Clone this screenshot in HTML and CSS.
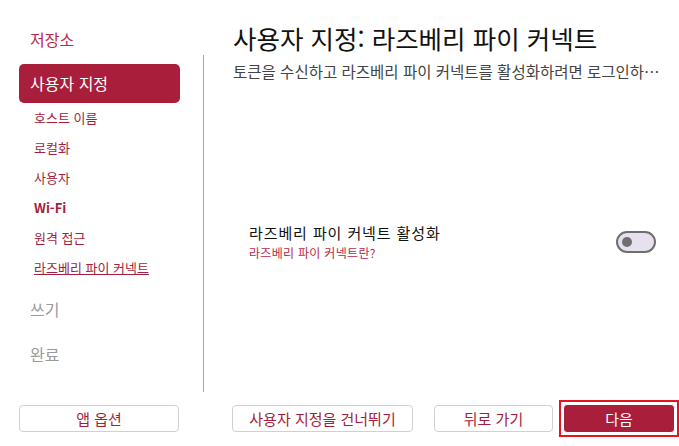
FILE: index.html
```html
<!DOCTYPE html>
<html lang="ko">
<head>
  <meta charset="UTF-8">
  <meta name="viewport" content="width=device-width, initial-scale=1.0">
  <title>사용자 지정</title>
  <link rel="stylesheet" href="styles.css">
</head>
<body>
  <div class="app">
    <!-- 사이드바 -->
    <nav class="sidebar">
      <div class="step">저장소</div>
      <div class="step active">사용자 지정</div>
      <div class="sub">호스트 이름</div>
      <div class="sub">로컬화</div>
      <div class="sub">사용자</div>
      <div class="sub bold">Wi-Fi</div>
      <div class="sub">원격 접근</div>
      <div class="sub current">라즈베리 파이 커넥트</div>
      <div class="step disabled">쓰기</div>
      <div class="step disabled">완료</div>
    </nav>

    <div class="divider"></div>

    <!-- 본문 -->
    <main class="content">
      <h1 class="title">사용자 지정: 라즈베리 파이 커넥트</h1>
      <p class="subtitle">토큰을 수신하고 라즈베리 파이 커넥트를 활성화하려면 로그인하여 이 장치를 계정에 연결하세요.</p>
      <div class="option-area">
        <div class="option">
          <div class="option-text">
            <div class="option-label">라즈베리 파이 커넥트 활성화</div>
            <a class="option-link" href="#">라즈베리 파이 커넥트란?</a>
          </div>
          <div class="toggle"><span class="knob"></span></div>
        </div>
      </div>
    </main>

    <!-- 하단 버튼 -->
    <div class="side-footer">
      <button class="btn side-btn">앱 옵션</button>
    </div>
    <div class="footer">
      <button class="btn skip">사용자 지정을 건너뛰기</button>
      <button class="btn back">뒤로 가기</button>
      <span class="focus-ring"><button class="btn next">다음</button></span>
    </div>
  </div>
</body>
</html>
```

FILE: styles.css
```css
body {
  margin: 0;
  background: #fff;
  font-family: "Noto Sans CJK KR", "Noto Sans", sans-serif;
  color: #111;
}
.app {
  display: grid;
  grid-template-columns: 203px 1px 1fr;
  grid-template-rows: 395px 51px;
  width: 679px;
  height: 446px;
  overflow: hidden;
}
.sidebar {
  padding: 20px 23px 0 19px;
  display: flex;
  flex-direction: column;
}
.step {
  height: 39px;
  line-height: 39px;
  padding-left: 11px;
  font-size: 16px;
  color: #b8284a;
  border-radius: 5px;
  margin-bottom: 5px;
}
.step.active {
  background: #a91e3b;
  color: #fff;
  margin-bottom: 0;
}
.step.disabled {
  color: #9a9a9a;
  margin-bottom: 6px;
}
.sub {
  height: 30px;
  line-height: 30px;
  padding-left: 15px;
  font-size: 13px;
  color: #a51d3c;
}
.sub.bold {
  font-weight: bold;
}
.sub.current {
  text-decoration: underline;
  margin-bottom: 7px;
}
.divider {
  background: #a8a8a8;
  margin: 55px 0 3px;
}
.content {
  padding: 21px 6px 0 29px;
  display: flex;
  flex-direction: column;
  min-width: 0;
}
.title {
  margin: 0;
  font-size: 25.5px;
  line-height: 34px;
  font-weight: normal;
  color: #111;
}
.subtitle {
  margin: 6px 0 0;
  font-size: 15.5px;
  line-height: 21px;
  color: #444;
  white-space: nowrap;
  overflow: hidden;
  text-overflow: ellipsis;
}
.option-area {
  flex: 1;
  display: flex;
  align-items: center;
  padding-top: 6px;
}
.option {
  flex: 1;
  display: flex;
  align-items: center;
  justify-content: space-between;
  padding: 0 17px 0 16px;
}
.option-label {
  font-size: 15px;
  line-height: 21px;
  letter-spacing: 0.9px;
  color: #111;
}
.option-link {
  display: block;
  margin-top: 1px;
  font-size: 12px;
  line-height: 17px;
  letter-spacing: 0.3px;
  color: #b8284a;
  text-decoration: none;
}
.toggle {
  width: 32px;
  height: 18px;
  border: 2px solid #6f6f6f;
  border-radius: 11px;
  background: #e7e0ef;
  display: flex;
  align-items: center;
  padding-left: 4px;
  box-sizing: content-box;
}
.knob {
  width: 10px;
  height: 10px;
  border-radius: 50%;
  background: #6f6f6f;
}
.side-footer {
  grid-column: 1 / 3;
  padding: 10px 0 0 19px;
}
.footer {
  padding: 10px 0 0 28px;
  display: flex;
  align-items: flex-start;
  gap: 6px;
}
.btn {
  height: 27px;
  border: 1px solid #d0d0d0;
  border-radius: 4px;
  background: #fff;
  color: #a51d3c;
  font-family: inherit;
  font-size: 15px;
  padding: 0;
  cursor: pointer;
  display: block;
}
.side-btn {
  width: 160px;
}
.skip {
  width: 181px;
  margin-right: auto;
}
.back {
  width: 119px;
}
.focus-ring {
  display: block;
  margin-top: -5px;
  padding: 2px;
  border: 2px solid #e3151f;
}
.next {
  width: 112px;
  height: 29px;
  background: #a91e3b;
  border: 1px solid #fff;
  color: #fff;
}
```
